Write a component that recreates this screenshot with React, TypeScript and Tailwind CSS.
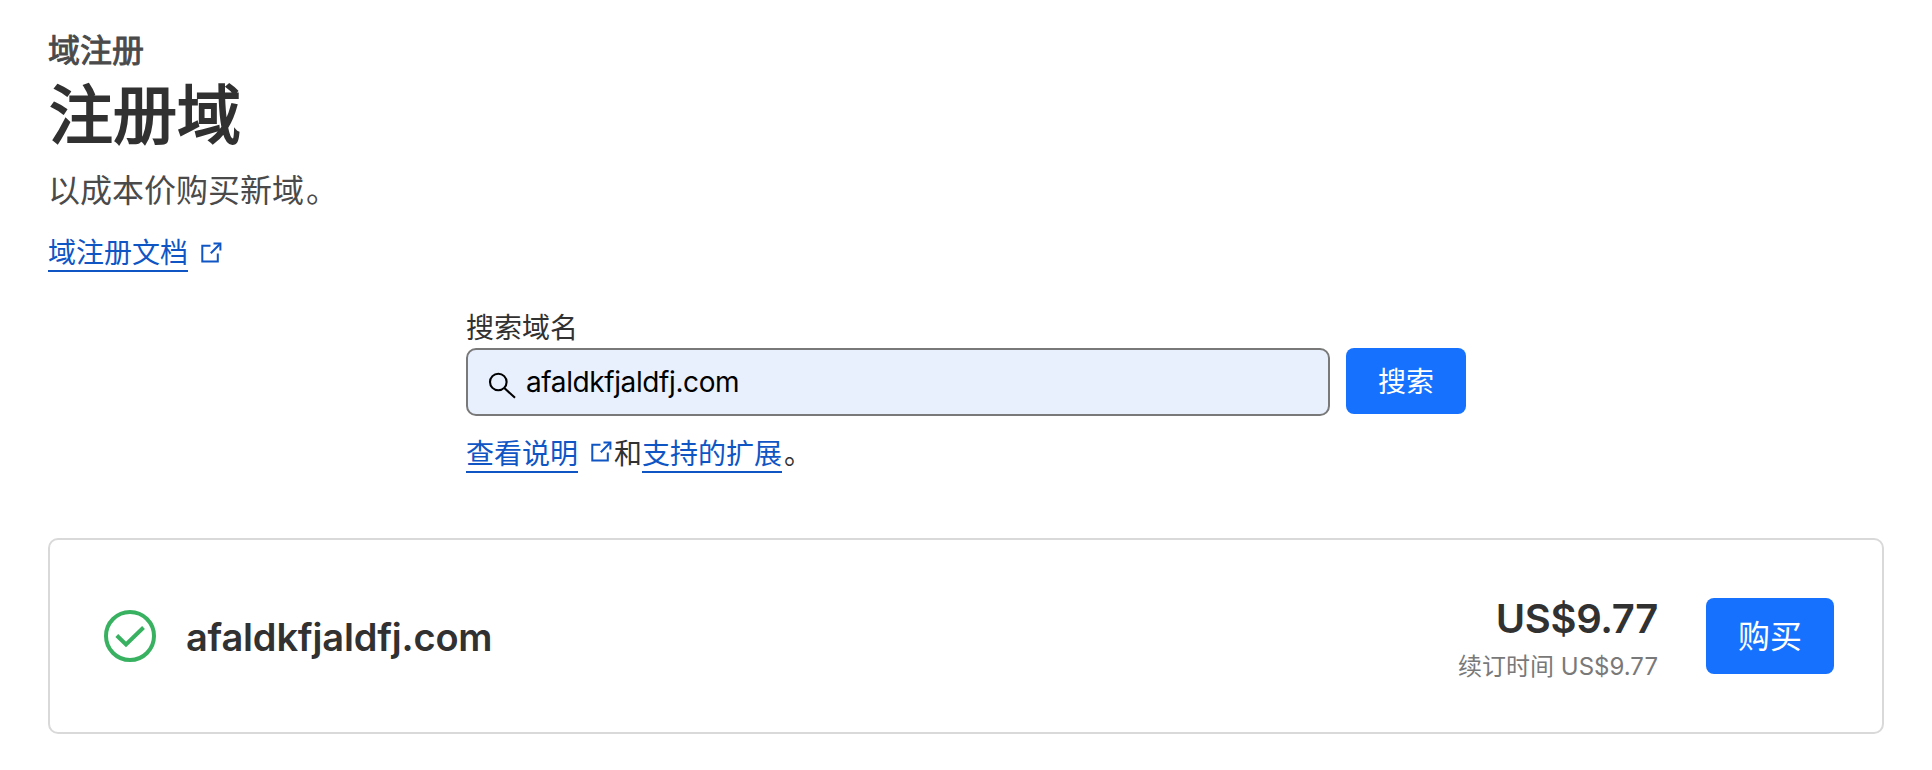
import React from "react";

function ExternalIcon({ className }: { className?: string }) {
  return (
    <svg viewBox="0 0 22 22" className={className} fill="none" stroke="currentColor" strokeWidth="2">
      <path d="M9.500 3.700H1.300V19.500H16.800V11.500" />
      <path d="M12.500 1.600H19.400V8.500" />
      <path d="M19.200 1.800L9.800 11.200" />
    </svg>
  );
}

function TextLink({ children }: { children: React.ReactNode }) {
  return (
    <a href="#" className="border-b-2 border-[#0f55c4] pt-1 leading-[34px] text-[#0f55c4]">
      {children}
    </a>
  );
}

function SearchIcon() {
  return (
    <svg viewBox="0 0 28 28" className="mt-2 size-7 shrink-0 text-black" fill="none" stroke="currentColor" strokeWidth="2.1">
      <circle cx="10.300" cy="10" r="8.300" />
      <path d="M16.300 16L27 25.800" />
    </svg>
  );
}

export default function App() {
  return (
    <main className="h-[770px] bg-white px-12 pt-[31px] font-['Inter','Noto_Sans_CJK_SC',sans-serif] text-[#313131]">
      <header className="flex flex-col items-start">
        <p className="h-10 text-[32px] leading-10 text-[#4a4a4a] [-webkit-text-stroke:0.9px_#4a4a4a]">域注册</p>
        <h1 className="mt-1 ml-px h-20 text-[64px] leading-[80px] font-normal [-webkit-text-stroke:2px_#313131]">注册域</h1>
        <p className="mt-3 h-12 text-[32px] leading-[48px] text-[#4a4a4a]">
          以成本价购买新域<span className="ml-[2px]">。</span>
        </p>
        <div className="mt-[17px] flex h-10 items-center text-[28px]">
          <TextLink>域注册文档</TextLink>
          <ExternalIcon className="mt-[2px] ml-[13px] size-[22px] text-[#0f55c4]" />
        </div>
      </header>

      <section className="mx-auto mt-9 w-[1000px] text-[28px]">
        <label htmlFor="domain" className="block h-10 leading-10">
          搜索域名
        </label>
        <div className="flex items-start gap-4">
          <div className="flex h-[68px] flex-1 items-center gap-[10px] rounded-[10px] border-2 border-[#797979] bg-[#e8f0fe] pl-5">
            <SearchIcon />
            <input
              id="domain"
              defaultValue="afaldkfjaldfj.com"
              className="min-w-0 flex-1 bg-transparent tracking-[-0.4px] text-black outline-none"
            />
          </div>
          <button className="h-[66px] w-[120px] rounded-lg bg-[#1672fe] pt-[2px] text-white">搜索</button>
        </div>
        <div className="mt-[17px] flex h-10 items-center leading-[38px]">
          <TextLink>查看说明</TextLink>
          <ExternalIcon className="mr-px mb-[2px] ml-[13px] size-[22px] text-[#0f55c4]" />
          <span className="pt-[2px]">和</span>
          <TextLink>支持的扩展</TextLink>
          <span className="ml-[2px] pt-[2px]">。</span>
        </div>
      </section>

      <section className="mt-[65px] flex h-[196px] items-center rounded-[10px] border-2 border-[#d9d9d9] pr-12 pl-[54px]">
        <svg viewBox="0 0 52 52" className="size-[52px] shrink-0" fill="none" stroke="#38b160" strokeWidth="4">
          <circle cx="26" cy="26" r="24" />
          <path d="M12.800 25.500L22 34.500L39.500 17.500" />
        </svg>
        <h2 className="ml-[30px] pt-[2px] text-[38px] leading-[48px] font-semibold tracking-[-0.2px]">afaldkfjaldfj.com</h2>
        <div className="mr-12 ml-auto pt-2 text-right">
          <p className="text-[40px] leading-[48px] font-semibold tracking-[-0.35px]">US$9.77</p>
          <p className="mt-[6px] text-[24px] leading-9 text-[#797979]">续订时间 US$9.77</p>
        </div>
        <button className="h-[76px] w-32 rounded-lg bg-[#1672fe] pt-[2px] text-[32px] text-white">购买</button>
      </section>
    </main>
  );
}
